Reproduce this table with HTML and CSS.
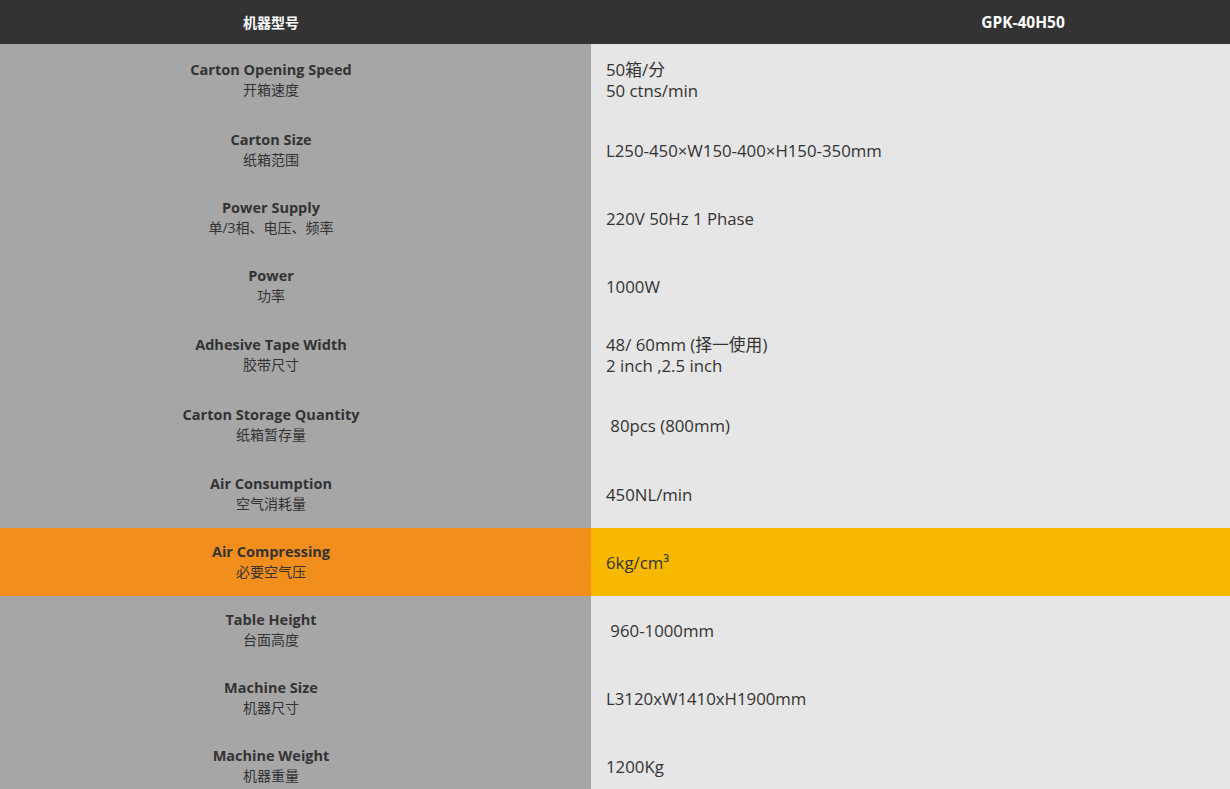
FILE: index.html
```html
<!DOCTYPE html>
<html lang="zh-CN">
<head>
    <meta charset="UTF-8">
    <meta name="viewport" content="width=device-width, initial-scale=1.0">
    <title>GPK-40H50 参数</title>
    <link rel="stylesheet" href="styles.css">
</head>
<body>
    <!-- Spec Table -->
    <table class="spec-table">
        <thead>
            <tr>
                <th class="label">机器型号</th>
                <th class="value">GPK-40H50</th>
            </tr>
        </thead>
        <tbody>
            <tr class="row-tall">
                <td class="label"><b>Carton Opening Speed</b><span>开箱速度</span></td>
                <td class="value">50箱/分<br>50 ctns/min</td>
            </tr>
            <tr>
                <td class="label"><b>Carton Size</b><span>纸箱范围</span></td>
                <td class="value">L250-450×W150-400×H150-350mm</td>
            </tr>
            <tr>
                <td class="label"><b>Power Supply</b><span>单/3相、电压、频率</span></td>
                <td class="value">220V 50Hz 1 Phase</td>
            </tr>
            <tr>
                <td class="label"><b>Power</b><span>功率</span></td>
                <td class="value">1000W</td>
            </tr>
            <tr class="row-mid">
                <td class="label"><b>Adhesive Tape Width</b><span>胶带尺寸</span></td>
                <td class="value">48/ 60mm (择一使用)<br>2 inch ,2.5 inch</td>
            </tr>
            <tr class="row-mid">
                <td class="label"><b>Carton Storage Quantity</b><span>纸箱暂存量</span></td>
                <td class="value">&nbsp;80pcs (800mm)</td>
            </tr>
            <tr>
                <td class="label"><b>Air Consumption</b><span>空气消耗量</span></td>
                <td class="value">450NL/min</td>
            </tr>
            <tr class="highlight">
                <td class="label"><b>Air Compressing</b><span>必要空气压</span></td>
                <td class="value">6kg/cm³</td>
            </tr>
            <tr>
                <td class="label"><b>Table Height</b><span>台面高度</span></td>
                <td class="value">&nbsp;960-1000mm</td>
            </tr>
            <tr>
                <td class="label"><b>Machine Size</b><span>机器尺寸</span></td>
                <td class="value">L3120xW1410xH1900mm</td>
            </tr>
            <tr>
                <td class="label"><b>Machine Weight</b><span>机器重量</span></td>
                <td class="value">1200Kg</td>
            </tr>
        </tbody>
    </table>
</body>
</html>
```

FILE: styles.css
```css
/* Page */
body {
    margin: 0;
    font-family: "Open Sans", "Noto Sans CJK SC", sans-serif;
    color: #333333;
}

/* Spec Table */
.spec-table {
    width: 100%;
    border-collapse: collapse;
    table-layout: fixed;
}

.spec-table th {
    background-color: #333333;
    color: #ffffff;
    font-size: 14px;
    font-weight: bold;
    height: 44px;
    padding: 0;
}

.spec-table th.label {
    width: 542px; /* + 49px padding = 591px column */
    text-align: center;
    padding-right: 49px;
}

.spec-table th.value {
    text-align: center;
    padding-left: 225px;
    font-size: 15.5px;
}

.spec-table td {
    height: 68px;
    padding: 0;
    vertical-align: middle;
}

.spec-table tr.row-tall td {
    height: 72px;
}

.spec-table tr.row-mid td {
    height: 70px;
}

/* Left column: English name + Chinese name */
.spec-table td.label {
    background-color: #a6a6a6;
    text-align: center;
    padding-right: 49px;
    line-height: 20px;
}

.spec-table td.label b {
    display: block;
    font-size: 14.5px;
}

.spec-table td.label span {
    display: block;
    font-size: 14px;
}

/* Right column: values */
.spec-table td.value {
    background-color: #e6e6e6;
    padding-left: 15px;
    font-size: 16.8px;
    line-height: 21px;
}

/* Highlighted row */
.spec-table tr.highlight td.label {
    background-color: #f28f1c;
}

.spec-table tr.highlight td.value {
    background-color: #f7b900;
}
```
